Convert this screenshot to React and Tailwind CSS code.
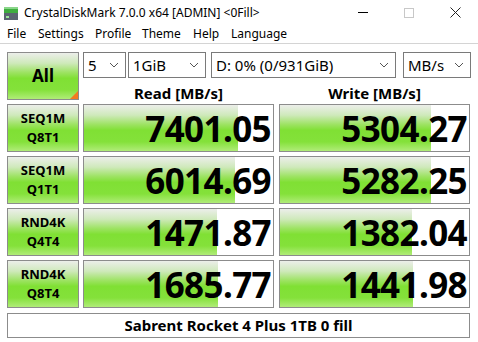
import React from 'react';

const rows = [
  { a: 'SEQ1M', b: 'Q8T1', read: '7401.05', rw: 154, write: '5304.27', ww: 151 },
  { a: 'SEQ1M', b: 'Q1T1', read: '6014.69', rw: 151, write: '5282.25', ww: 151 },
  { a: 'RND4K', b: 'Q4T4', read: '1471.87', rw: 133, write: '1382.04', ww: 132 },
  { a: 'RND4K', b: 'Q8T4', read: '1685.77', rw: 134, write: '1441.98', ww: 133 },
];

const green = 'bg-[linear-gradient(to_bottom,#eceeea_0%,#cfe9bb_22%,#9ee364_42%,#80e034_55%,#84e13a_80%,#b0ec78_100%)]';

function Chevron() {
  return (
    <svg width="10" height="6" viewBox="0 0 10 6" className="shrink-0">
      <path d="M1 1 L5 5 L9 1" fill="none" stroke="#555" strokeWidth="1" />
    </svg>
  );
}

function Combo({ w, label }) {
  return (
    <div className={`${w} h-[26px] border border-[#7a7a7a] bg-white flex items-center justify-between pl-[4px] pr-[6px] text-[15px] text-black`}>
      <span>{label}</span>
      <Chevron />
    </div>
  );
}

function Cell({ value, width }) {
  return (
    <div className="relative w-[191px] h-full border border-[#8c8c8c] bg-white overflow-hidden">
      <div className={`absolute left-0 top-0 bottom-0 ${green}`} style={{ width }} />
      <div className="relative h-full flex items-center justify-end pr-[2px] pt-[1px] text-[35px] font-bold text-black leading-none tracking-[-0.6px]">
        {value}
      </div>
    </div>
  );
}

export default function App() {
  return (
    <div className="w-[478px] h-[342px] bg-white font-['Noto_Sans',sans-serif] text-black overflow-hidden select-none">
      {/* TITLE BAR */}
      <div className="h-[25px] flex items-center">
        <svg width="16" height="16" viewBox="0 0 16 16" className="ml-[3px] mr-[5px]">
          <rect x="1" y="2" width="14" height="6" fill="#3fae3f" />
          <rect x="1" y="2" width="14" height="2" fill="#8ad68a" />
          <rect x="1" y="8" width="14" height="7" fill="#5a6570" />
          <rect x="3" y="11" width="3" height="2" fill="#9be89b" />
        </svg>
        <span className="text-[12px]">CrystalDiskMark 7.0.0 x64 [ADMIN] &lt;0Fill&gt;</span>
        <div className="ml-auto flex items-center h-full">
          <div className="w-[46px] flex justify-center">
            <div className="w-[10px] h-px bg-black" />
          </div>
          <div className="w-[46px] flex justify-center">
            <div className="w-[10px] h-[10px] border border-[#c8c8c8]" />
          </div>
          <div className="w-[46px] flex justify-center">
            <svg width="11" height="11" viewBox="0 0 11 11">
              <path d="M0.5 0.5 L10.5 10.5 M10.5 0.5 L0.5 10.5" stroke="#222" strokeWidth="1" />
            </svg>
          </div>
        </div>
      </div>

      {/* MENU */}
      <div className="h-[19px] flex items-center text-[12px] pl-[7px] border-b border-[#d4d4d4]">
        <span className="w-[31px]">File</span>
        <span className="w-[57px]">Settings</span>
        <span className="w-[47px]">Profile</span>
        <span className="w-[51px]">Theme</span>
        <span className="w-[38px]">Help</span>
        <span>Language</span>
      </div>

      {/* MAIN */}
      <div className="pl-[7px] pt-[8px] flex flex-col gap-[4px]">
        <div className="flex gap-[4px] h-[48px]">
          <div className={`relative w-[72px] h-full border border-[#8c8c8c] ${green} flex items-center justify-center text-[17px] font-bold`}>
            All
            <div className="absolute right-0 bottom-0 w-0 h-0 border-l-[8px] border-l-transparent border-b-[8px] border-b-[#f47a20]" />
          </div>
          <div className="flex flex-col">
            <div className="flex">
              <Combo w="w-[43px]" label="5" />
              <div className="w-[2px]" />
              <Combo w="w-[78px]" label="1GiB" />
              <div className="w-[5px]" />
              <Combo w="w-[185px]" label="D: 0% (0/931GiB)" />
              <div className="w-[7px]" />
              <Combo w="w-[68px]" label="MB/s" />
            </div>
            <div className="flex flex-1 items-center pt-[4px] text-[15px] font-bold">
              <div className="w-[191px] text-center">Read [MB/s]</div>
              <div className="w-[5px]" />
              <div className="w-[191px] text-center">Write [MB/s]</div>
            </div>
          </div>
        </div>

        {rows.map((r, i) => (
          <div key={i} className="flex h-[48px]">
            <div className={`w-[72px] h-full border border-[#8c8c8c] ${green} flex flex-col items-center justify-center text-[13px] font-bold leading-[19px]`}>
              <span>{r.a}</span>
              <span>{r.b}</span>
            </div>
            <div className="w-[4px]" />
            <Cell value={r.read} width={r.rw} />
            <div className="w-[5px]" />
            <Cell value={r.write} width={r.ww} />
          </div>
        ))}

        <div className="w-[463px] h-[25px] mt-[1px] border border-[#8c8c8c] flex items-center justify-center text-[15px] font-bold">
          Sabrent Rocket 4 Plus 1TB 0 fill
        </div>
      </div>
    </div>
  );
}
